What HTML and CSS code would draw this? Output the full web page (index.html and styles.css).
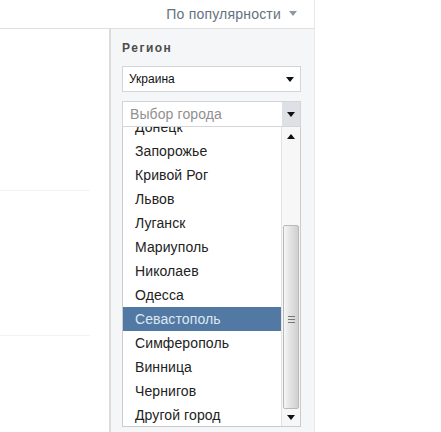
FILE: index.html
```html
<!DOCTYPE html>
<html lang="ru">
<head>
<meta charset="utf-8">
<title>Регион</title>
<link rel="stylesheet" href="styles.css">
</head>
<body>
<div class="page">
  <header class="topbar">
    <span class="sort">По популярности</span>
    <span class="sort-caret"></span>
  </header>
  <div class="content">
    <main class="results">
      <div class="rule rule-a"></div>
      <div class="rule rule-b"></div>
    </main>
    <aside class="sidebar">
      <h3 class="title">Регион</h3>
      <div class="select country">
        <span class="select-label">Украина</span>
        <span class="arrow down"></span>
      </div>
      <div class="city-wrap">
        <div class="select city">
          <span class="select-label">Выбор города</span>
          <span class="city-btn"><span class="arrow down"></span></span>
        </div>
        <div class="popup">
          <ul class="list">
            <li>Донецк</li>
            <li>Запорожье</li>
            <li>Кривой Рог</li>
            <li>Львов</li>
            <li>Луганск</li>
            <li>Мариуполь</li>
            <li>Николаев</li>
            <li>Одесса</li>
            <li class="selected">Севастополь</li>
            <li>Симферополь</li>
            <li>Винница</li>
            <li>Чернигов</li>
            <li>Другой город</li>
          </ul>
          <div class="scrollbar">
            <div class="sb-btn"><span class="arrow up"></span></div>
            <div class="sb-track">
              <div class="sb-thumb"><span class="grip"></span></div>
            </div>
            <div class="sb-btn"><span class="arrow down"></span></div>
          </div>
        </div>
      </div>
      <div class="below"><span class="check"></span><span>мужских</span></div>
    </aside>
  </div>
</div>
</body>
</html>
```
FILE: styles.css
```css
* { box-sizing: border-box; }
html, body { margin: 0; padding: 0; background: #fff; }
body { font-family: "Liberation Sans", Arial, sans-serif; }
.page { width: 315px; height: 432px; border-right: 1px solid #e8e8e8; overflow: hidden; }
.topbar {
  height: 29px;
  border-bottom: 1px solid #dfdfdf;
  display: flex;
  align-items: center;
  justify-content: flex-end;
  padding: 0 17px 1px 0;
  gap: 8px;
}
.sort { font-size: 14px; color: #64727e; letter-spacing: 0.2px; }
.sort-caret {
  width: 0; height: 0;
  border-left: 4.5px solid transparent;
  border-right: 4.5px solid transparent;
  border-top: 5px solid #8e99a3;
}
.content { display: flex; height: 403px; }
.results { width: 109px; display: flex; flex-direction: column; }
.rule { width: 90px; height: 1px; background: #f3f3f3; }
.rule-a { margin-top: 161px; }
.rule-b { margin-top: 144px; }
.sidebar {
  width: 205px;
  background: #f5f6f7;
  border-left: 2px solid #dcdcdc;
  padding: 12px 13px 0 11px;
}
.title { margin: 0 0 11px; font-size: 12px; line-height: 14px; font-weight: 700; color: #4c4c4c; letter-spacing: 1.5px; }
.select {
  width: 179px;
  height: 26px;
  background: #fff;
  border: 1px solid #d3d5d8;
  display: flex;
  align-items: center;
  justify-content: space-between;
}
.select-label { font-size: 12px; color: #111; padding-left: 6px; }
.country { padding-right: 6px; }
.city-wrap { position: relative; margin-top: 9px; }
.city { padding: 0; position: relative; z-index: 2; }
.city .select-label { font-size: 14px; color: #909090; padding-left: 7px; letter-spacing: 0.1px; }
.city-btn {
  width: 18px; height: 24px;
  background: #dde1e6;
  display: flex; align-items: center; justify-content: center;
}
.arrow { display: block; width: 0; height: 0; border-left: 4px solid transparent; border-right: 4px solid transparent; }
.arrow.down { border-top: 5px solid #111; }
.arrow.up { border-bottom: 5px solid #111; }
.popup {
  position: absolute;
  left: 0; top: 25px;
  width: 179px; height: 301px;
  background: #fff;
  border: 1px solid #c9cbce;
  border-top: 0;
  display: flex;
  overflow: hidden;
  z-index: 1;
}
.list { list-style: none; margin: -11px 0 0; padding: 0; flex: 1; min-width: 0; }
.list li { height: 24px; line-height: 24px; font-size: 14px; color: #222; padding-left: 12px; letter-spacing: 0.1px; }
.list li.selected { background: #5279a4; color: #dfe8f1; }
.scrollbar { width: 19px; flex: none; border-left: 1px solid #e2e2e2; display: flex; flex-direction: column; background: #f7f7f7; }
.sb-btn { height: 17px; display: flex; align-items: center; justify-content: center; }
.scrollbar .sb-btn:first-child { height: 99px; align-items: flex-start; padding-top: 8px; }
.sb-track { flex: 1; min-height: 0; padding: 0 1px; }
.sb-thumb {
  height: 100%;
  border: 1px solid #b9b9b9;
  border-radius: 2px;
  background: linear-gradient(to right, #f6f6f6, #e2e2e2 45%, #d0d0d0);
  display: flex;
  align-items: flex-start;
  justify-content: center;
  padding-top: 90px;
}
.grip { width: 7px; height: 7px; background: repeating-linear-gradient(to bottom, #777 0 1px, transparent 1px 3px); }
.below { display: flex; align-items: center; gap: 6px; margin-top: 331px; padding-left: 14px; font-size: 13px; color: #444; line-height: 14px; letter-spacing: 0.2px; }
.check { width: 3px; height: 12px; background: #ddd; }
```
